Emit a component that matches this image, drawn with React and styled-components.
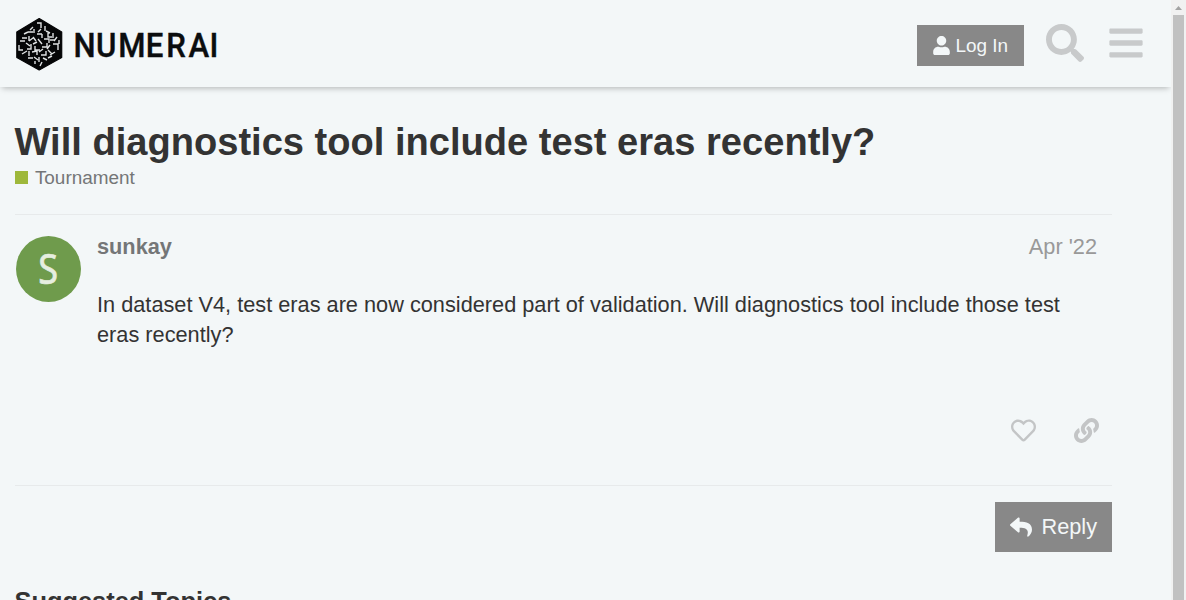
import React from 'react';
import styled, { createGlobalStyle } from 'styled-components';
import { FaUser, FaSearch, FaBars, FaRegHeart, FaLink, FaReply } from 'react-icons/fa';

const GlobalStyle = createGlobalStyle`
  * { box-sizing: border-box; }
  body {
    margin: 0;
    height: 600px;
    overflow: hidden;
    background: #f3f7f8;
    color: #333;
    font: 21.74px/30px "Liberation Sans", Arial, sans-serif;
  }
`;

const Shell = styled.div`
  display: flex;
  height: 600px;
  overflow: hidden;
`;

const Page = styled.div`
  flex: 1;
  min-width: 0;
  overflow: hidden;
`;

const Header = styled.header`
  display: flex;
  align-items: center;
  height: 87px;
  padding: 0 26px 0 15px;
  box-shadow: 0 3px 6px -2px rgba(0, 0, 0, 0.28);
`;

const Logo = styled.svg`
  display: block;
  width: 210px;
  height: 60px;
  margin-right: auto;
`;

const Wordmark = styled.text`
  font: 500 33.5px Roboto, sans-serif;
  fill: #0b0d0e;
  stroke: #0b0d0e;
  stroke-width: 0.4px;
`;

const Button = styled.button`
  display: flex;
  align-items: center;
  border: 0;
  border-radius: 0;
  background: #888;
  color: #f3f7f8;
  font-family: inherit;
  font-size: ${(p) => p.$size}px;
  width: ${(p) => p.$width}px;
  height: ${(p) => p.$height}px;
  padding: 0 0 0 ${(p) => p.$pad}px;
  margin-top: ${(p) => p.$top || 0}px;
  gap: ${(p) => p.$gap}px;
  svg { flex: none; }
`;

const UserIcon = styled(FaUser)`
  width: 17px;
  height: 19px;
`;

const HeaderIcon = styled.a`
  display: flex;
  color: #c8cacb;
  margin: 0 0 2px ${(p) => p.$left}px;
`;

const Content = styled.main`
  width: 1097.5px;
  margin-left: 14.5px;
  padding-top: 31px;
`;

const Title = styled.h1`
  margin: 0;
  font-size: 38.1px;
  line-height: 49px;
  white-space: nowrap;
`;

const Category = styled.div`
  display: flex;
  align-items: center;
  gap: 7.4px;
  height: 26px;
  margin-top: -2px;
  color: #747677;
  font-size: 18.93px;
  &::before {
    content: "";
    width: 13px;
    height: 13px;
    margin-bottom: 1px;
    background: #9eb83b;
  }
`;

const Post = styled.article`
  display: flex;
  height: 272px;
  margin-top: 23px;
  border: solid #e7eaeb;
  border-width: 1px 0;
  padding: 21px 15px 0 1px;
`;

const Avatar = styled.div`
  flex: none;
  width: 65px;
  height: 66px;
  border-radius: 50%;
  background: #6f9b4c;
  color: #e6eee0;
  font: 41px/65px "Noto Sans", sans-serif;
  text-align: center;
  -webkit-text-stroke: 0.7px #e6eee0;
  span {
    display: inline-block;
    transform: scaleX(0.88);
  }
`;

const PostBody = styled.div`
  flex: 1;
  margin-left: 16.5px;
`;

const Meta = styled.div`
  display: flex;
  justify-content: space-between;
  line-height: 22px;
  color: #999;
  strong { color: #747677; }
`;

const Text = styled.p`
  margin: 32px 0 0;
`;

const Actions = styled.div`
  display: flex;
  justify-content: flex-end;
  gap: 38px;
  margin: 68px -2px 0 0;
  color: #c3c5c6;
`;

const Footer = styled.div`
  display: flex;
  justify-content: flex-end;
  padding-top: 16px;
`;

const Suggested = styled.h3`
  margin: 34px 0 0;
  font-size: 25.4px;
  line-height: 30px;
`;

const Scrollbar = styled.div`
  display: flex;
  flex-direction: column;
  align-items: center;
  width: 15px;
  background: #f1f1f1;
  svg { flex: none; display: block; }
`;

const Thumb = styled.div`
  width: 11px;
  flex: 1;
  background: #c1c1c1;
`;

const HEX_MARKS =
  'M22 9h4v5M26 15l-3 3M18 13l-3 3M19 15v4M30 12v5M31 17l4 2M13 18h5M9 20l4-2M7 24h5M22 20h5M27 20v4M33 19v4h4M38 19v5M42 23l-3 4M35 26h5M5 27h5M14 22v5M14 27l4-3M18 23l3 4M23 25l4 5M29 25h5v4M4 31v5h4M11 29l4 3M12 35h4v-5M18 30l4-2M20 32v4h5M27 33h5v-4M35 31l-3 4M38 30h5v6M44 26v4M7 40l5-3M14 37v5M17 38l5-1v4M24 38l4-3M26 41h5v-4M33 36l4 4M35 41l5-3M13 44h5M19 43l4 3M24 43v5M28 44l4 2M33 44l4-2M20 47v3M27 48l-2 4';

function NumeraiLogo() {
  return (
    <Logo viewBox="0 0 210 60" aria-label="Numerai">
      <path d="M24.2 4.5 46.7 18v25.5L24.2 56 1.8 43.5V18Z" fill="#050607" stroke="#050607" strokeWidth="1.2" strokeLinejoin="round" />
      <path d={HEX_MARKS} fill="none" stroke="#dfe2e3" strokeWidth="1.4" />
      <Wordmark x="62.8 87 111 140.5 162.6 186.6 209.2" y="43" transform="scale(.93 1)">NUMERAI</Wordmark>
    </Logo>
  );
}

export default function App() {
  return (
    <>
      <GlobalStyle />
      <Shell>
        <Page>
          <Header>
            <NumeraiLogo />
            <Button $size={18.93} $width={107} $height={41} $pad={16} $gap={5.5} $top={4}>
              <UserIcon />
              Log In
            </Button>
            <HeaderIcon $left={22}><FaSearch size={38} /></HeaderIcon>
            <HeaderIcon $left={23}><FaBars size={38} /></HeaderIcon>
          </Header>
          <Content>
            <Title>Will diagnostics tool include test eras recently?</Title>
            <Category>Tournament</Category>
            <Post>
              <Avatar><span>S</span></Avatar>
              <PostBody>
                <Meta>
                  <strong>sunkay</strong>
                  <span>Apr '22</span>
                </Meta>
                <Text>
                  In dataset V4, test eras are now considered part of validation. Will diagnostics tool include those test eras recently?
                </Text>
                <Actions>
                  <FaRegHeart size={25} />
                  <FaLink size={25} />
                </Actions>
              </PostBody>
            </Post>
            <Footer>
              <Button $size={21.74} $width={117} $height={50} $pad={15} $gap={9.5}>
                <FaReply size={22} />
                Reply
              </Button>
            </Footer>
            <Suggested>Suggested Topics</Suggested>
          </Content>
        </Page>
        <Scrollbar>
          <svg width="15" height="15"><path d="M4 10 7.5 6 11 10Z" fill="#a3a3a3" /></svg>
          <Thumb />
        </Scrollbar>
      </Shell>
    </>
  );
}
